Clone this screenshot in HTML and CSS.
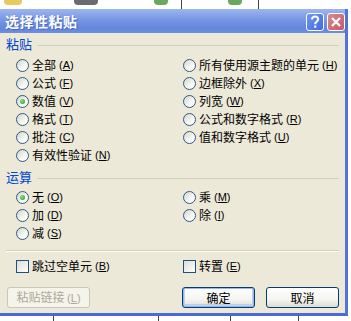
FILE: index.html
```html
<!DOCTYPE html>
<html lang="zh-CN">

<head>
    <meta charset="UTF-8">
    <title>选择性粘贴</title>
    <link rel="stylesheet" href="styles.css">
</head>

<body>
    <div class="sheet-top">
        <span class="blob blob-a"></span>
        <span class="blob blob-b"></span>
        <span class="blob blob-c"></span>
        <span class="blob blob-d"></span>
    </div>

    <div class="frame">
        <div class="dialog">
            <div class="titlebar">
                <span class="title">选择性粘贴</span>
                <div class="caption-btns">
                    <span class="cap help">
                        <svg width="18" height="18" viewBox="0 0 18 18">
                            <path d="M6 6.5c0-2 1.4-3 3.1-3s3.1 1 3.1 2.7c0 1.4-.9 2-1.8 2.6-.8.5-1.1.9-1.1 1.9v.6" fill="none" stroke="#fff" stroke-width="2.1"/>
                            <rect x="8.2" y="12.6" width="2.1" height="2.1" fill="#fff"/>
                        </svg>
                    </span>
                    <span class="cap close">
                        <svg width="18" height="18" viewBox="0 0 18 18">
                            <path d="M5 5l8 8M13 5l-8 8" stroke="#fff" stroke-width="2.2"/>
                        </svg>
                    </span>
                </div>
            </div>

            <div class="content">
                <div class="group-head">粘贴</div>
                <div class="options paste">
                    <label class="opt"><span class="radio"></span>全部 <span class="key">(<u>A</u>)</span></label>
                    <label class="opt"><span class="radio"></span>公式 <span class="key">(<u>F</u>)</span></label>
                    <label class="opt"><span class="radio checked"></span>数值 <span class="key">(<u>V</u>)</span></label>
                    <label class="opt"><span class="radio"></span>格式 <span class="key">(<u>T</u>)</span></label>
                    <label class="opt"><span class="radio"></span>批注 <span class="key">(<u>C</u>)</span></label>
                    <label class="opt"><span class="radio"></span>有效性验证 <span class="key">(<u>N</u>)</span></label>
                    <label class="opt"><span class="radio"></span>所有使用源主题的单元 <span class="key">(<u>H</u>)</span></label>
                    <label class="opt"><span class="radio"></span>边框除外 <span class="key">(<u>X</u>)</span></label>
                    <label class="opt"><span class="radio"></span>列宽 <span class="key">(<u>W</u>)</span></label>
                    <label class="opt"><span class="radio"></span>公式和数字格式 <span class="key">(<u>R</u>)</span></label>
                    <label class="opt"><span class="radio"></span>值和数字格式 <span class="key">(<u>U</u>)</span></label>
                </div>

                <div class="group-head ops-head">运算</div>
                <div class="options ops">
                    <label class="opt"><span class="radio checked"></span>无 <span class="key">(<u>O</u>)</span></label>
                    <label class="opt"><span class="radio"></span>加 <span class="key">(<u>D</u>)</span></label>
                    <label class="opt"><span class="radio"></span>减 <span class="key">(<u>S</u>)</span></label>
                    <label class="opt"><span class="radio"></span>乘 <span class="key">(<u>M</u>)</span></label>
                    <label class="opt"><span class="radio"></span>除 <span class="key">(<u>I</u>)</span></label>
                </div>

                <div class="separator"></div>

                <div class="options checks">
                    <label class="opt"><span class="check"></span>跳过空单元 <span class="key">(<u>B</u>)</span></label>
                    <label class="opt"><span class="check"></span>转置 <span class="key">(<u>E</u>)</span></label>
                </div>

                <div class="btns">
                    <button class="btn link" disabled>粘贴链接 <span class="key">(<u>L</u>)</span></button>
                    <button class="btn ok">确定</button>
                    <button class="btn cancel">取消</button>
                </div>
            </div>
        </div>
    </div>

    <div class="sheet-bottom"></div>
</body>

</html>
```

FILE: styles.css
```css
body {
    margin: 0;
    width: 351px;
    height: 321px;
    overflow: hidden;
    background-color: #ffffff;
    font-family: "Noto Sans CJK SC", "Noto Sans", sans-serif;
}

/* spreadsheet behind the dialog */
.sheet-top {
    height: 9px;
    display: flex;
    align-items: flex-start;
    background: linear-gradient(90deg, transparent 181px, #444 181px, #444 182px, transparent 182px, transparent 258px, #444 258px, #444 259px, transparent 259px);
}

.blob {
    height: 5px;
    border-radius: 0 0 4px 4px;
}

.blob-a {
    width: 18px;
    margin-left: 4px;
    background-color: #e8c860;
}

.blob-b {
    width: 24px;
    margin-left: 52px;
    background-color: #6a6a72;
}

.blob-c {
    width: 14px;
    margin-left: 56px;
    background-color: #6aa860;
}

.blob-d {
    width: 14px;
    margin-left: 60px;
    background-color: #6aa860;
}

.frame {
    width: 348px;
    border-right: 3px solid #5473d8;
    border-bottom: 3px solid #4a6bd4;
    box-sizing: border-box;
}

.titlebar {
    height: 24px;
    display: flex;
    align-items: center;
    justify-content: space-between;
    padding: 0 0 0 5px;
    background: linear-gradient(#9db6f0, #7796e4 45%, #6486dc 80%, #6e8ede);
}

.title {
    color: #ffffff;
    font-size: 14px;
    font-weight: bold;
    letter-spacing: 0.5px;
    text-shadow: 1px 1px 0 #4a68c0;
}

.caption-btns {
    display: flex;
    gap: 3px;
    padding-top: 2px;
}

.cap {
    width: 18px;
    height: 18px;
    border: 1px solid #ffffff;
    border-radius: 3px;
    box-sizing: border-box;
    display: flex;
    align-items: center;
    justify-content: center;
    overflow: hidden;
}

.cap svg {
    flex: none;
}

.help {
    background: linear-gradient(135deg, #6f96f0, #3f6ce0);
}

.close {
    background: linear-gradient(135deg, #d88a90, #c45a66);
}

.content {
    height: 280px;
    box-sizing: border-box;
    padding-top: 4px;
    background-color: #ece9d8;
    font-size: 12px;
    color: #000000;
}

.group-head {
    display: flex;
    align-items: center;
    gap: 5px;
    height: 14px;
    padding: 0 6px;
    color: #0046d5;
    font-size: 13px;
    line-height: 14px;
}

.group-head::after {
    content: "";
    flex: 1;
    border-top: 1px solid #d0d0bf;
    margin-top: 3px;
}

.options {
    display: grid;
    grid-template-columns: 167px 1fr;
    grid-auto-flow: column;
    padding-left: 16px;
}

.paste {
    grid-template-rows: repeat(6, 18px);
    margin-top: 5px;
}

.ops-head {
    margin-top: 6px;
}

.ops {
    grid-template-rows: repeat(3, 18px);
    margin-top: 4px;
}

.opt {
    display: flex;
    align-items: center;
    gap: 3px;
    line-height: 18px;
    white-space: nowrap;
}

.key {
    font-family: "Liberation Sans", Arial, sans-serif;
    font-size: 11px;
}

.radio {
    width: 13px;
    height: 13px;
    border: 1px solid #2f5a86;
    border-radius: 50%;
    box-sizing: border-box;
    background: linear-gradient(135deg, #d6d6cf, #f6f6f2 60%, #ffffff);
    display: flex;
    align-items: center;
    justify-content: center;
    flex: none;
}

.radio.checked::after {
    content: "";
    width: 5px;
    height: 5px;
    border-radius: 50%;
    background: radial-gradient(circle at 35% 35%, #7ee07a, #21a121);
}

.separator {
    margin: 8px 6px 0 6px;
    border-top: 1px solid #d0d0bf;
    border-bottom: 1px solid #ffffff;
}

.checks {
    grid-template-rows: 18px;
    margin-top: 5px;
}

.check {
    width: 13px;
    height: 13px;
    border: 1px solid #1c5180;
    box-sizing: border-box;
    background: linear-gradient(135deg, #dcdcd7, #ffffff);
    flex: none;
}

.btns {
    display: flex;
    padding: 0 6px 0 7px;
    margin-top: 12px;
}

.btn {
    height: 21px;
    padding: 0;
    font-family: "Noto Sans CJK SC", "Noto Sans", sans-serif;
    font-size: 12px;
    line-height: 17px;
    color: #000000;
    border: 1px solid #003c74;
    border-radius: 3px;
    background: linear-gradient(#ffffff, #f4f4f0 60%, #e0ddd0);
}

.btn.link {
    width: 83px;
    color: #aca899;
    border-color: #c9c7ba;
    background: #f5f4ea;
}

.btn.ok {
    width: 73px;
    margin-left: auto;
    box-shadow: inset 0 0 0 1px #9ab6ee, inset 0 -1px 0 2px #bfd0f4;
}

.btn.cancel {
    width: 73px;
    margin-left: 11px;
}

.sheet-bottom {
    height: 5px;
    background: linear-gradient(90deg, transparent 53px, #444 53px, #444 54px, transparent 54px, transparent 158px, #444 158px, #444 159px, transparent 159px, transparent 230px, #444 230px, #444 231px, transparent 231px, transparent 298px, #444 298px, #444 299px, transparent 299px);
}
```
